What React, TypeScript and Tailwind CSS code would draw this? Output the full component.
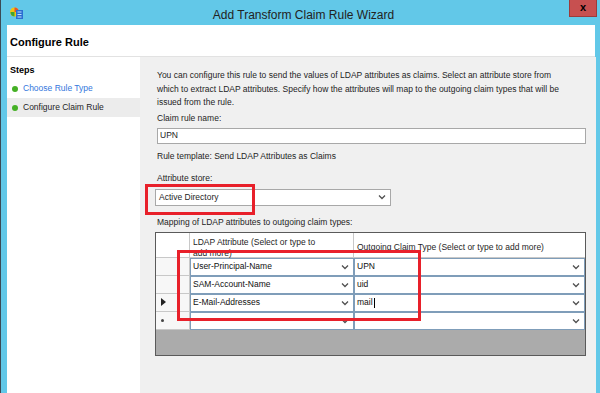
import React from "react";

const Chevron = () => (
  <svg width="8" height="6" viewBox="0 0 8 6" className="shrink-0">
    <polyline points="1,1.5 4,4.5 7,1.5" fill="none" stroke="#505050" strokeWidth="1.3" />
  </svg>
);

const Combo = ({ value, cursor, w }: { value: string; cursor?: boolean; w: string }) => (
  <div className={`${w} h-full border border-[#7f9db9] bg-white flex items-center justify-between pl-[2px] pr-[4px]`}>
    <span className="text-[8.5px] text-[#111] flex items-center">
      {value}
      {cursor && <span className="inline-block w-px h-[10px] bg-black ml-px" />}
    </span>
    <Chevron />
  </div>
);

const rows = [
  { attr: "User-Principal-Name", claim: "UPN", mark: "" },
  { attr: "SAM-Account-Name", claim: "uid", mark: "" },
  { attr: "E-Mail-Addresses", claim: "mail", mark: "arrow", cursor: true },
  { attr: "", claim: "", mark: "new" },
];

const AppIcon = () => (
  <svg width="15" height="14" viewBox="0 0 15 14">
    <circle cx="5.5" cy="6" r="4.5" fill="#f2c511" />
    <path d="M1.5 6 A4.5 4.5 0 0 0 5.5 10.5 L5.5 6 Z" fill="#3fa535" />
    <path d="M5.5 1.5 A4.5 4.5 0 0 1 10 6 L5.5 6 Z" fill="#e8522c" />
    <rect x="7" y="4" width="7" height="9" fill="#2b6fd1" />
    <rect x="8.5" y="5.5" width="4" height="1" fill="#bfe0ff" />
    <rect x="8.5" y="8" width="4" height="1" fill="#bfe0ff" />
    <rect x="8.5" y="10.5" width="4" height="1" fill="#bfe0ff" />
  </svg>
);

export default function App() {
  return (
    <div className="w-[600px] h-[393px] overflow-hidden bg-[#62c8e8] flex flex-col font-['Liberation_Sans',Arial,sans-serif] text-[#1e1e1e] border-l border-[#3b4a55]">
      {/* title bar */}
      <div className="h-[25px] shrink-0 flex">
        <div className="w-[140px] pl-[8px] pt-[6px]">
          <AppIcon />
        </div>
        <div className="flex-1 text-center text-[12px] text-[#222] pt-[6px] pl-[6px]">Add Transform Claim Rule Wizard</div>
        <div className="w-[140px] flex justify-end pr-[3px]">
          <div className="w-[28px] h-[17px] bg-[#c75050] border border-[#9c3b3b] border-t-0 flex items-center justify-center">
            <span className="text-[11px] font-bold text-black leading-none -mt-[2px]">x</span>
          </div>
        </div>
      </div>

      {/* window body */}
      <div className="flex-1 ml-[6px] mr-[5px] bg-white flex flex-col">
        <div className="h-[32px] shrink-0 flex items-center pl-[3px] pt-[4px] border-b border-[#e2e2e2]">
          <span className="text-[11px] font-bold text-black">Configure Rule</span>
        </div>
        <div className="flex-1 flex">
          {/* steps */}
          <div className="w-[136px] shrink-0 bg-white border-r-[3px] border-[#f0f0f0] pt-[6px]">
            <div className="text-[9px] font-bold text-black pl-[3px] h-[16px] flex items-center">Steps</div>
            <div className="h-[19px] flex items-center pl-[5px] gap-[5px]">
              <span className="w-[6px] h-[6px] rounded-full bg-[#45b025]" />
              <span className="text-[8.5px] text-[#3377dd]">Choose Rule Type</span>
            </div>
            <div className="h-[19px] flex items-center pl-[5px] gap-[5px] bg-[#ececec]">
              <span className="w-[6px] h-[6px] rounded-full bg-[#45b025]" />
              <span className="text-[8.5px] text-[#1e1e1e]">Configure Claim Rule</span>
            </div>
          </div>

          {/* content */}
          <div className="flex-1 bg-[#f0f0f0] pl-[14px] pr-[10px] pt-[12px] text-[8.5px] relative">
            <p className="leading-[13.5px] whitespace-nowrap">
              You can configure this rule to send the values of LDAP attributes as claims. Select an attribute store from
              <br />
              which to extract LDAP attributes. Specify how the attributes will map to the outgoing claim types that will be
              <br />
              issued from the rule.
            </p>
            <div className="mt-[2px] h-[12px] leading-[12px]">Claim rule name:</div>
            <div className="mt-[4px] h-[16px] bg-white border border-[#a8a8a8] flex items-center pl-[2px]">UPN</div>
            <div className="mt-[6px] h-[12px] leading-[12px]">Rule template: Send LDAP Attributes as Claims</div>
            <div className="mt-[10px] h-[12px] leading-[12px]">Attribute store:</div>
            <div className="mt-[5px] w-[236px] h-[17px] -ml-[2px] bg-white border border-[#a8a8a8] flex items-center justify-between pl-[3px] pr-[4px]">
              <span>Active Directory</span>
              <Chevron />
            </div>
            <div className="mt-[10px] h-[12px] leading-[12px]">Mapping of LDAP attributes to outgoing claim types:</div>

            {/* grid */}
            <div className="mt-[4px] -ml-[2px] w-[431px] h-[124px] border border-[#5a5a5a] bg-[#ababab] flex flex-col">
              <div className="h-[25px] flex bg-white border-b border-[#c8c8c8]">
                <div className="w-[34px] border-r border-[#c8c8c8]" />
                <div className="w-[164px] border-r border-[#c8c8c8] pl-[3px] pt-[4px] leading-[11px]">
                  LDAP Attribute (Select or type to
                  <br />
                  add more)
                </div>
                <div className="flex-1 pl-[3px] flex items-center pt-[5px]">Outgoing Claim Type (Select or type to add more)</div>
              </div>
              {rows.map((r, i) => (
                <div key={i} className="h-[18px] flex bg-white">
                  <div className="w-[34px] border-r border-b border-[#c8c8c8] bg-[#f7f7f7] flex items-center pl-[5px]">
                    {r.mark === "arrow" && (
                      <svg width="5" height="8" viewBox="0 0 5 8">
                        <polygon points="0,0 5,4 0,8" fill="#222" />
                      </svg>
                    )}
                    {r.mark === "new" && <span className="w-[3px] h-[3px] rounded-full bg-[#444]" />}
                  </div>
                  <Combo w="w-[164px]" value={r.attr} />
                  <Combo w="flex-1" value={r.claim} cursor={r.cursor} />
                </div>
              ))}
            </div>

            {/* highlight boxes */}
            <div className="absolute left-[2px] top-[127px] w-[110px] h-[31px] border-[3px] border-[#e8202a]" />
            <div className="absolute left-[34px] top-[193px] w-[244px] h-[71px] border-[3px] border-[#e8202a]" />
          </div>
        </div>
      </div>
    </div>
  );
}
